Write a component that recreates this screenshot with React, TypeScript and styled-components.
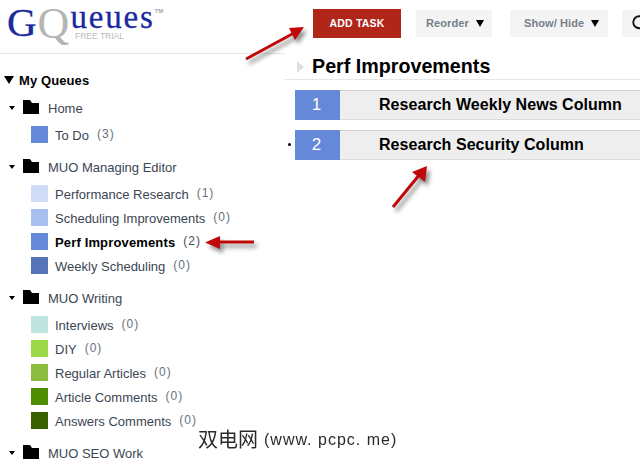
import React from 'react'
import styled, {createGlobalStyle} from 'styled-components'
import {Search} from 'lucide-react'

const GlobalStyle = createGlobalStyle`
  html, body {
    margin: 0;
    padding: 0;
    background: #fff;
    overflow: hidden;
  }
  body {
    font-family: "Liberation Sans", Arial, sans-serif;
  }
`

const Page = styled.div`
  position: relative;
  width: 640px;
  height: 463px;
  display: flex;
  overflow: hidden;
  background: #fff;
`

const Sidebar = styled.aside`
  width: 285px;
  flex: none;
`

const LogoBar = styled.div`
  height: 53px;
  border-bottom: 1px solid #e6e6e6;
  padding-left: 7px;
  display: flex;
  align-items: flex-start;
  font-family: "Liberation Serif", serif;
  position: relative;
`

const LogoG = styled.span`
  font-size: 41px;
  margin-top: -2px;
  color: #1c2a9c;
  -webkit-text-stroke: 0.3px #1c2a9c;
`

const LogoQ = styled.span`
  font-size: 44px;
  margin-top: -2px;
  margin-left: 1px;
  color: #b4b4b4;
`

const LogoRest = styled.span`
  font-size: 33px;
  letter-spacing: 1.8px;
  margin-left: 1px;
  margin-top: -1px;
  color: #1c2a9c;
  -webkit-text-stroke: 0.3px #1c2a9c;
`

const LogoTm = styled.span`
  font-family: "Liberation Sans", sans-serif;
  font-size: 6px;
  font-weight: bold;
  color: #a8a8a8;
  margin-top: 8px;
`

const FreeTrial = styled.span`
  position: absolute;
  left: 75px;
  top: 31px;
  font-family: "Liberation Sans", sans-serif;
  font-size: 8.5px;
  line-height: 10px;
  color: #b8b8b8;
`

const QueuesHead = styled.div`
  height: 20px;
  margin-top: 16px;
  padding-left: 4px;
  display: flex;
  align-items: center;
  gap: 5px;
  font-size: 13px;
  letter-spacing: 0.1px;
  font-weight: bold;
  color: #000;
`

const Caret = styled.span<{$half: number; $height: number}>`
  width: 0;
  height: 0;
  flex: none;
  border-left: ${p => p.$half}px solid transparent;
  border-right: ${p => p.$half}px solid transparent;
  border-top: ${p => p.$height}px solid #000;
`

const GroupRow = styled.div<{$gap: number}>`
  height: 20px;
  margin-top: ${p => p.$gap}px;
  padding-left: 9px;
  display: flex;
  align-items: center;
  font-size: 13px;
  color: #3b4654;
`

const Folder = styled.svg`
  width: 16px;
  height: 14px;
  margin-left: 8px;
  margin-right: 9px;
  flex: none;
  margin-top: -3px;
`

const ItemList = styled.div`
  display: flex;
  flex-direction: column;
  gap: 7px;
  margin-top: 8px;
  padding-left: 31px;
`

const Item = styled.div`
  height: 17px;
  display: flex;
  align-items: center;
  font-size: 13px;
  color: #3b4654;
`

const Swatch = styled.span<{$color: string}>`
  width: 17px;
  height: 17px;
  flex: none;
  margin-right: 7px;
  background: ${p => p.$color};
`

const ItemName = styled.span<{$active?: boolean}>`
  padding-top: 1px;
  font-weight: ${p => (p.$active ? 'bold' : 'normal')};
  letter-spacing: ${p => (p.$active ? '0.15px' : '0')};
  color: ${p => (p.$active ? '#000' : 'inherit')};
`

const Count = styled.span<{$active?: boolean}>`
  margin-left: 8px;
  margin-top: -2px;
  font-size: 12px;
  letter-spacing: 1px;
  color: ${p => (p.$active ? '#444c56' : '#68727e')};
`

const Main = styled.main`
  flex: 1;
  min-width: 0;
  overflow: hidden;
`

const Toolbar = styled.div`
  height: 40px;
  padding-top: 9px;
  padding-left: 28px;
  box-sizing: border-box;
  display: flex;
  align-items: flex-start;
`

const AddTask = styled.button`
  width: 88px;
  height: 29px;
  flex: none;
  border: 0;
  padding: 0 0 1px;
  background: #b0271a;
  color: #fff;
  font-family: inherit;
  font-size: 10.5px;
  font-weight: bold;
  letter-spacing: 0.2px;
`

const ToolButton = styled.button<{$width: number; $left: number; $pad: number}>`
  width: ${p => p.$width}px;
  height: 27px;
  flex: none;
  margin-top: 1px;
  margin-left: ${p => p.$left}px;
  border: 0;
  padding: 0 0 1px ${p => p.$pad}px;
  background: #f4f4f4;
  color: #767e88;
  font-family: inherit;
  font-size: 11px;
  font-weight: bold;
  letter-spacing: 0.1px;
  display: flex;
  align-items: center;
  gap: 7px;
`

const SearchIcon = styled(Search)`
  color: #111;
  flex: none;
`

const TitleRow = styled.div`
  height: 38px;
  border-bottom: 1px solid #e6e6e6;
  padding-left: 12px;
  padding-bottom: 1px;
  display: flex;
  align-items: flex-end;
  gap: 8px;
  font-size: 19.7px;
  font-weight: bold;
  color: #000;
`

const TitleMark = styled.span`
  width: 0;
  height: 0;
  flex: none;
  margin-bottom: 5px;
  border-top: 6px solid transparent;
  border-bottom: 6px solid transparent;
  border-left: 7px solid #e0e0e0;
`

const TaskList = styled.div`
  margin-top: 10px;
  margin-left: 10px;
  display: flex;
  flex-direction: column;
  gap: 10px;
`

const Task = styled.div`
  position: relative;
  height: 30px;
  display: flex;
`

const TaskNumber = styled.div`
  width: 45px;
  flex: none;
  background: #6688d8;
  color: #fff;
  font-size: 17px;
  display: flex;
  align-items: center;
  justify-content: center;
  padding-right: 2px;
  box-sizing: border-box;
`

const TaskBody = styled.div`
  flex: 1;
  background: #eeeeee;
  border-top: 1px solid #cfcfcf;
  border-bottom: 1px solid #dcdcdc;
  box-sizing: border-box;
  padding-left: 39px;
  display: flex;
  align-items: center;
  font-size: 16px;
  font-weight: bold;
  letter-spacing: 0.05px;
  color: #000;
  white-space: nowrap;
`

const Bullet = styled.span`
  position: absolute;
  left: -7px;
  top: 13px;
  width: 3px;
  height: 3px;
  border-radius: 50%;
  background: #000;
`

const Arrow = styled.svg`
  position: absolute;
  left: 0;
  top: 0;
  width: 640px;
  height: 463px;
  pointer-events: none;
  filter: drop-shadow(3px 4px 2px rgba(0, 0, 0, 0.45));
`

const Watermark = styled.div`
  position: absolute;
  left: 198px;
  top: 427px;
  display: flex;
  align-items: center;
  font-family: "Liberation Sans", "Noto Sans CJK SC", sans-serif;
  font-size: 20px;
  line-height: 26px;
  color: #2a2a2a;
  white-space: nowrap;
  filter: blur(0.3px);
`

const WatermarkLatin = styled.span`
  margin-left: 6px;
  font-size: 16px;
  letter-spacing: 1px;
`

interface QueueItem {
  name: string;
  count: number;
  color: string;
  active?: boolean;
}

interface QueueGroup {
  name: string;
  gap: number;
  items: QueueItem[];
}

const groups: QueueGroup[] = [
  {
    name: 'Home',
    gap: 8,
    items: [{name: 'To Do', count: 3, color: '#6688d8'}],
  },
  {
    name: 'MUO Managing Editor',
    gap: 14,
    items: [
      {name: 'Performance Research', count: 1, color: '#d0dcf6'},
      {name: 'Scheduling Improvements', count: 0, color: '#a8c0f0'},
      {name: 'Perf Improvements', count: 2, color: '#6688d8', active: true},
      {name: 'Weekly Scheduling', count: 0, color: '#5874b8'},
    ],
  },
  {
    name: 'MUO Writing',
    gap: 14,
    items: [
      {name: 'Interviews', count: 0, color: '#c0e4e0'},
      {name: 'DIY', count: 0, color: '#9cd848'},
      {name: 'Regular Articles', count: 0, color: '#8cbc40'},
      {name: 'Article Comments', count: 0, color: '#508c00'},
      {name: 'Answers Comments', count: 0, color: '#386000'},
    ],
  },
  {name: 'MUO SEO Work', gap: 14, items: []},
]

const tasks = ['Research Weekly News Column', 'Research Security Column']

const App: React.FC = () => {
  return (
    <Page>
      <GlobalStyle/>
      <Sidebar>
        <LogoBar>
          <LogoG>G</LogoG>
          <LogoQ>Q</LogoQ>
          <LogoRest>ueues</LogoRest>
          <LogoTm>TM</LogoTm>
          <FreeTrial>FREE TRIAL</FreeTrial>
        </LogoBar>
        <QueuesHead>
          <Caret $half={5.5} $height={8}/>
          My Queues
        </QueuesHead>
        {groups.map(group => (
          <React.Fragment key={group.name}>
            <GroupRow $gap={group.gap}>
              <Caret $half={3.5} $height={4}/>
              <Folder viewBox="0 0 16 14">
                <path d="M0 0h7l2 3h7v11H0z" fill="#000"/>
              </Folder>
              {group.name}
            </GroupRow>
            {group.items.length > 0 && (
              <ItemList>
                {group.items.map(item => (
                  <Item key={item.name}>
                    <Swatch $color={item.color}/>
                    <ItemName $active={item.active}>{item.name}</ItemName>
                    <Count $active={item.active}>({item.count})</Count>
                  </Item>
                ))}
              </ItemList>
            )}
          </React.Fragment>
        ))}
      </Sidebar>
      <Main>
        <Toolbar>
          <AddTask>ADD TASK</AddTask>
          <ToolButton $width={76} $left={15} $pad={10}>
            Reorder
            <Caret $half={4.5} $height={7}/>
          </ToolButton>
          <ToolButton $width={98} $left={18} $pad={14}>
            Show/ Hide
            <Caret $half={4.5} $height={7}/>
          </ToolButton>
          <ToolButton $width={40} $left={14} $pad={9}>
            <SearchIcon size={18} strokeWidth={2.5}/>
          </ToolButton>
        </Toolbar>
        <TitleRow>
          <TitleMark/>
          Perf Improvements
        </TitleRow>
        <TaskList>
          {tasks.map((task, i) => (
            <Task key={task}>
              {i === 1 && <Bullet/>}
              <TaskNumber>{i + 1}</TaskNumber>
              <TaskBody>{task}</TaskBody>
            </Task>
          ))}
        </TaskList>
      </Main>
      <Arrow viewBox="0 0 640 463">
        <path d="M246 59L294 33" stroke="#c00808" strokeWidth="3" fill="none"/>
        <path d="M304 27L289 28L295 40z" fill="#c00808"/>
      </Arrow>
      <Arrow viewBox="0 0 640 463">
        <path d="M393 207L420 174" stroke="#c00808" strokeWidth="3" fill="none"/>
        <path d="M427 166L412 172L425 182z" fill="#c00808"/>
      </Arrow>
      <Arrow viewBox="0 0 640 463">
        <path d="M218 242H254" stroke="#c00808" strokeWidth="3" fill="none"/>
        <path d="M205 242.5L220 236V249z" fill="#c00808"/>
      </Arrow>
      <Watermark>
        双电网
        <WatermarkLatin>(www. pcpc. me)</WatermarkLatin>
      </Watermark>
    </Page>
  )
}

export default App
